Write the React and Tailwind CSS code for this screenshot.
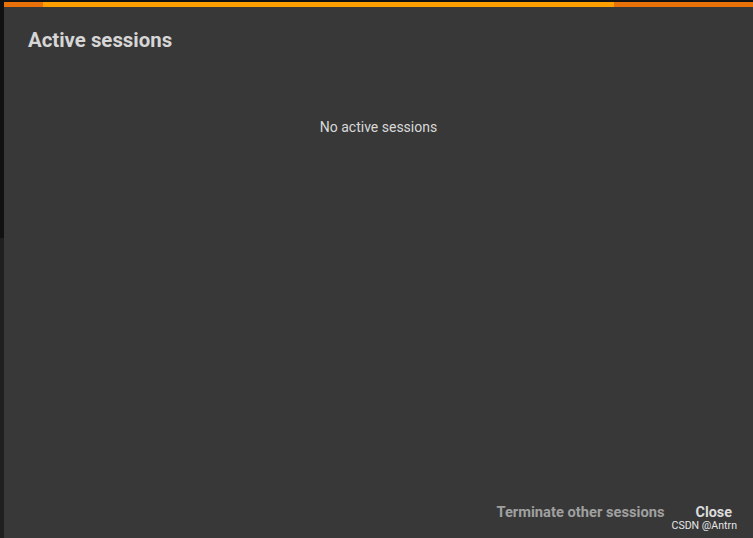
export default function App() {
  return (
    <div className="w-[753px] h-[538px] flex bg-[#121212] font-['Roboto',sans-serif] overflow-hidden">
      {/* editor behind the dialog */}
      <div className="w-[4px] flex flex-col">
        <div className="h-[238px] bg-[#111111]" />
        <div className="flex-1 bg-[#1f1f1f]" />
      </div>

      <div className="flex-1 mt-[2px] flex flex-col bg-[#383838]">
        <div className="h-[5px] flex">
          <div className="w-[39px] bg-[#e8710a]" />
          <div className="w-[571px] bg-[#ffa000]" />
          <div className="flex-1 bg-[#e8710a]" />
        </div>

        <h2 className="px-[24px] pt-[20px] text-[20.4px] leading-[26px] font-bold text-[#d6d6d6]">Active sessions</h2>

        <div className="flex-1 flex justify-center pt-[65px]">
          <p className="text-[14px] leading-[18px] text-[#d9d9d9]">No active sessions</p>
        </div>

        <div className="relative flex justify-end items-baseline gap-[31px] pr-[21px] pb-[16px]">
          <button className="text-[14.7px] leading-[18px] font-bold text-[#a0a0a0]">Terminate other sessions</button>
          <button className="text-[14.4px] leading-[18px] font-bold text-[#dcdcdc]">Close</button>
          <span className="absolute right-[16px] bottom-[6px] text-[10.6px] leading-[13px] text-[#e6e6e6]">CSDN @Antrn</span>
        </div>
      </div>
    </div>
  );
}
